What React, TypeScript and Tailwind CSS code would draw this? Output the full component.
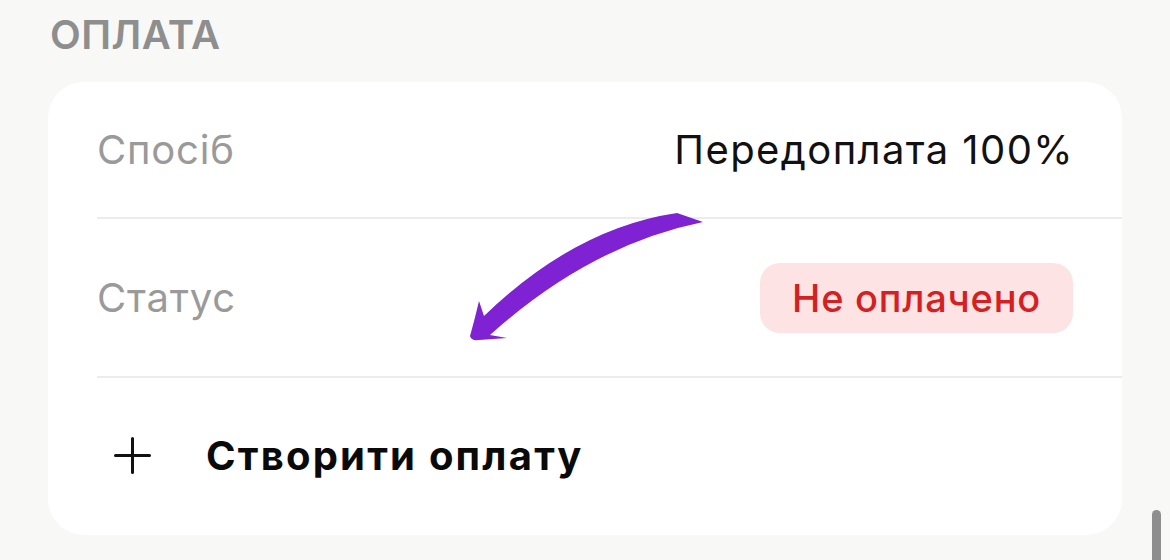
import React from "react";

export default function App() {
  return (
    <div
      className="relative w-[1170px] h-[560px] overflow-hidden bg-[#f8f8f6]"
      style={{ fontFamily: "Inter, 'Noto Sans', sans-serif" }}
    >
      <div className="pl-[50px] pt-[15px] h-[82px] text-[40px] leading-none font-semibold tracking-[0.01em] text-[#8e8e8e]">
        ОПЛАТА
      </div>
      <div className="ml-[48px] w-[1074px] h-[453px] bg-white rounded-[36px] flex flex-col">
        <div className="h-[135px] flex items-center justify-between pl-[49px] pr-[48px]">
          <span className="text-[40px] leading-none tracking-[0.02em] text-[#9a9a9a]">Спосіб</span>
          <span className="text-[40px] leading-none tracking-[0.035em] text-[#111111]">Передоплата 100%</span>
        </div>
        <div className="ml-[49px] h-[2px] bg-[#ececec]" />
        <div className="h-[157px] flex items-center justify-between pl-[49px] pr-[49px]">
          <span className="text-[40px] leading-none tracking-[0.02em] text-[#9a9a9a]">Статус</span>
          <span className="h-[70px] px-[32px] rounded-[20px] bg-[#fde3e3] flex items-center text-[38px] leading-none font-medium tracking-[0.02em] text-[#d41f23]">
            Не оплачено
          </span>
        </div>
        <div className="ml-[49px] h-[2px] bg-[#ececec]" />
        <div className="h-[157px] flex items-center pl-[66px] pb-[2px]">
          <svg width="37" height="37" viewBox="0 0 37 37" className="shrink-0">
            <path d="M18.5 1.5 V35.5 M1.5 18.5 H35.5" stroke="#111" strokeWidth="3" strokeLinecap="round" />
          </svg>
          <span className="ml-[55px] text-[40px] leading-none font-bold tracking-[0.055em] text-[#0a0a0a]">Створити оплату</span>
        </div>
      </div>
      <svg
        className="absolute inset-0 pointer-events-none"
        width="1170"
        height="560"
        viewBox="0 0 1170 560"
      >
        <path
          d="M 677 213 Q 575 228 484 316 L 479 301 Q 474 322 470 336 Q 471 341 479 340 L 507 338 L 490 335 Q 590 245 703 222 Z"
          fill="#7f22d4"
        />
      </svg>
      <div className="absolute left-[1152px] top-[510px] w-[9px] h-[70px] rounded-full bg-[#8e8e8e]" />
    </div>
  );
}
